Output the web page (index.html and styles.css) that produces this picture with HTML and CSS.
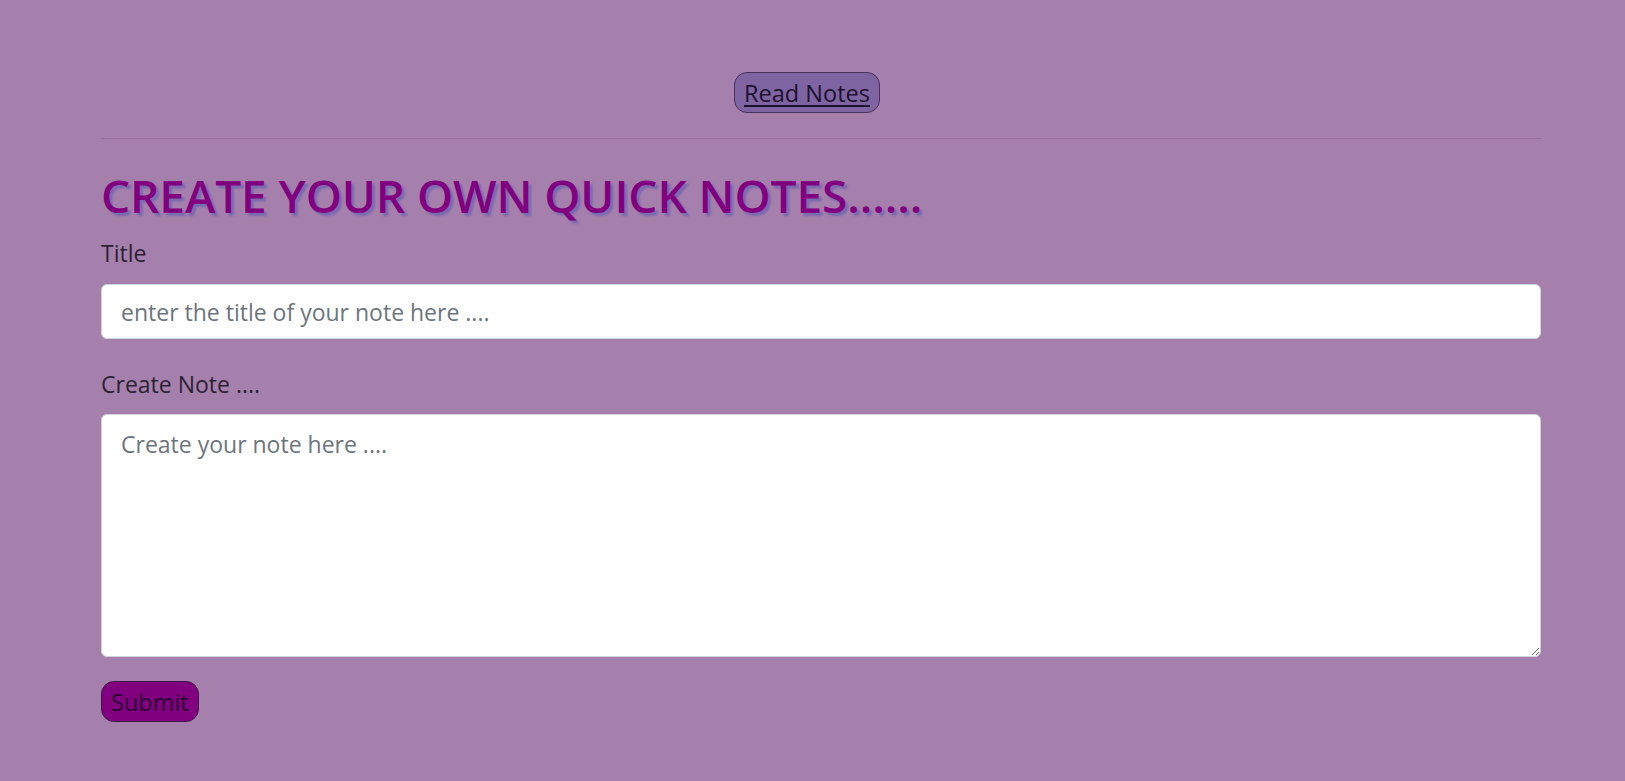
FILE: index.html
```html
<!DOCTYPE html>
<html lang="en">
<head>
<meta charset="utf-8">
<title>Quick Notes</title>
<link rel="stylesheet" href="styles.css">
</head>
<body>
<div class="page">
  <nav class="topnav">
    <a class="read-btn" href="#">Read Notes</a>
  </nav>
  <hr class="divider">
  <h1 class="heading">CREATE YOUR OWN QUICK NOTES......</h1>
  <form class="note-form">
    <label class="label" for="title">Title</label>
    <input class="field" id="title" type="text" placeholder="enter the title of your note here ....">
    <label class="label label-note" for="note">Create Note ....</label>
    <textarea class="field area" id="note" placeholder="Create your note here ...."></textarea>
    <div class="actions">
      <button class="submit-btn" type="button">Submit</button>
    </div>
  </form>
</div>
</body>
</html>
```
FILE: styles.css
```css
html, body {
  margin: 0;
  padding: 0;
  background: #a680ac;
  font-family: "Open Sans", "Noto Sans", sans-serif;
  color: #2c2236;
}
.page {
  padding: 72px 84px 40px 101px;
  box-sizing: border-box;
  min-height: 781px;
}
.topnav {
  display: flex;
  justify-content: center;
  padding-right: 28px;
}
.read-btn {
  display: inline-block;
  height: 41px;
  box-sizing: border-box;
  padding: 0 9px;
  line-height: 40px;
  font-size: 23.5px;
  color: #1c1030;
  background: #7f64a2;
  border: 1px solid #4b3160;
  border-radius: 13px;
  text-decoration: underline;
  text-underline-offset: 3px;
}
.divider {
  margin: 25px 0 0 0;
  border: 0;
  border-top: 1px solid #9a6ea0;
  height: 0;
}
.heading {
  margin: 29px 0 0 0;
  font-size: 46px;
  line-height: 54px;
  font-weight: 600;
  color: #800080;
  text-shadow: 3px 3px 2px #7a6ab0;
  letter-spacing: -0.1px;
}
.note-form {
  display: flex;
  flex-direction: column;
  margin-top: 15px;
}
.label {
  font-size: 23px;
  line-height: 32px;
}
.field {
  margin-top: 15px;
  height: 55px;
  box-sizing: border-box;
  border: 1px solid #ced4da;
  border-radius: 6px;
  background: #fff;
  padding: 9px 19px;
  font-family: inherit;
  font-size: 23px;
  color: #212529;
  outline: none;
}
.field::placeholder {
  color: #6c757d;
}
.label-note {
  margin-top: 29px;
}
.area {
  margin-top: 14px;
  height: 243px;
  resize: vertical;
  padding-top: 12px;
  line-height: 1.5;
}
.actions {
  margin-top: 24px;
}
.submit-btn {
  height: 41px;
  box-sizing: border-box;
  padding: 0 9px;
  font-family: inherit;
  font-size: 23.5px;
  color: #2a0032;
  background: #800080;
  border: 1px solid #3f1448;
  border-radius: 13px;
}
```
